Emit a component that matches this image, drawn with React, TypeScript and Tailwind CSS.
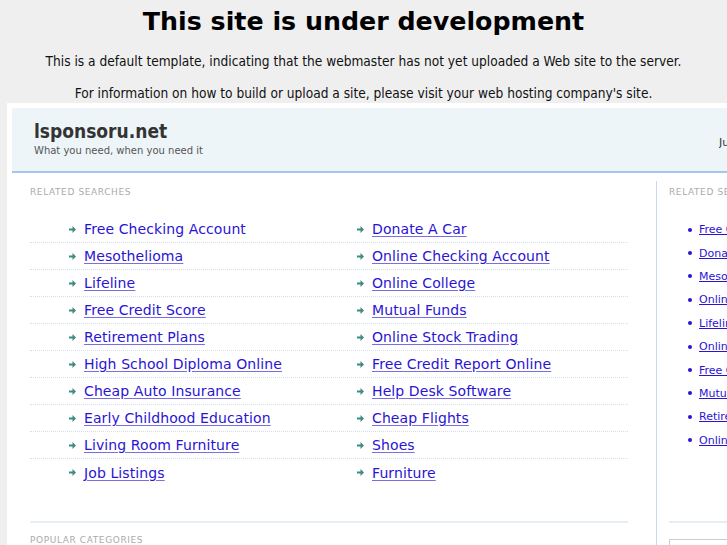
import React from "react";

const left: string[][] = [
  ["Free Checking Account", "Donate A Car"],
  ["Mesothelioma", "Online Checking Account"],
  ["Lifeline", "Online College"],
  ["Free Credit Score", "Mutual Funds"],
  ["Retirement Plans", "Online Stock Trading"],
  ["High School Diploma Online", "Free Credit Report Online"],
  ["Cheap Auto Insurance", "Help Desk Software"],
  ["Early Childhood Education", "Cheap Flights"],
  ["Living Room Furniture", "Shoes"],
  ["Job Listings", "Furniture"],
];

const right = [
  "Free Checking Account",
  "Donate A Car",
  "Mesothelioma",
  "Online Checking Account",
  "Lifeline",
  "Online College",
  "Free Credit Score",
  "Mutual Funds",
  "Retirement Plans",
  "Online Stock Trading",
];

function Arrow() {
  return (
    <svg width="7" height="7" viewBox="0 0 7 7" className="shrink-0">
      <path d="M0 2.5h3.5V0L7 3.5 3.5 7V4.5H0z" fill="#3c8c80" />
    </svg>
  );
}

function Cell({ text, first }: { text: string; first: boolean }) {
  return (
    <div className="flex items-center pl-[39px] h-full">
      <Arrow />
      <a
        href="#"
        className={`ml-[8px] text-[14px] leading-none text-[#2a14d4] tracking-[0.1px] ${first ? "no-underline" : "underline decoration-[#7a6ee6] underline-offset-2"}`}
      >
        {text}
      </a>
    </div>
  );
}

export default function App() {
  return (
    <div className="h-[545px] overflow-hidden bg-[#efefef] font-['DejaVu_Sans',sans-serif]">
      <h1 className="text-center font-bold text-[25.3px] leading-[30px] pt-[7px] text-black">
        This site is under development
      </h1>
      <p className="text-center text-[13.6px] leading-[17px] mt-[16px] text-[#111] font-['DejaVu_Sans_Condensed','DejaVu_Sans',sans-serif]">
        This is a default template, indicating that the webmaster has not yet uploaded a Web site to the server.
      </p>
      <p className="text-center text-[13.6px] leading-[17px] mt-[15px] text-[#111] font-['DejaVu_Sans_Condensed','DejaVu_Sans',sans-serif]">
        For information on how to build or upload a site, please visit your web hosting company's site.
      </p>
      <div className="ml-[7px] mt-[1px] bg-white pt-[5px] pl-[5px] h-[500px]">
        <div className="h-[65px] bg-[#eef5f8] border-b-2 border-[#a9c4ea] flex justify-between items-start">
          <div className="pl-[22px] pt-[12px]">
            <div className="text-[19px] leading-[22px] font-bold text-[#333] font-['DejaVu_Sans_Condensed','DejaVu_Sans',sans-serif]">
              lsponsoru.net
            </div>
            <div className="text-[10px] leading-[12px] text-[#555] mt-[3px]">What you need, when you need it</div>
          </div>
          <div className="pt-[27px] text-[11px] text-[#333] w-[8px] overflow-hidden whitespace-nowrap">June</div>
        </div>
        <div className="flex">
          <div className="w-[644px] shrink-0 pl-[18px] pr-[28px] pt-[14px]">
            <div className="text-[9px] leading-[11px] tracking-[0.6px] text-[#aaa] uppercase">Related searches</div>
            <div className="mt-[18px]">
              {left.map((row, i) => (
                <div
                  key={i}
                  className={`grid grid-cols-[288px_1fr] h-[27px] ${i < left.length - 1 ? "border-b border-dotted border-[#d3dfea]" : ""}`}
                >
                  <Cell text={row[0]} first={i === 0} />
                  <Cell text={row[1]} first={false} />
                </div>
              ))}
            </div>
            <div className="mt-[35px] border-t-2 border-[#e6eef5]" />
            <div className="mt-[12px] text-[9px] leading-[11px] tracking-[0.6px] text-[#aaa] uppercase">Popular categories</div>
          </div>
          <div className="mt-[8px] w-px h-[400px] bg-[#c6dbf3] shrink-0" />
          <div className="flex-1 pl-[12px] pt-[14px] overflow-hidden whitespace-nowrap">
            <div className="text-[9px] leading-[11px] tracking-[0.6px] text-[#aaa] uppercase">Related searches</div>
            <div className="mt-[20px] pl-[19px]">
              {right.map((t, i) => (
                <div key={i} className="h-[23.4px] flex items-center">
                  <span className="w-[4px] h-[4px] rounded-full bg-[#2a14d4] shrink-0" />
                  <a href="#" className="ml-[7px] text-[11px] leading-none text-[#2a14d4] underline">
                    {t}
                  </a>
                </div>
              ))}
            </div>
            <div className="mt-[69px] border-t-2 border-[#e6eef5]" />
            <div className="mt-[16px] h-[20px] border border-[#ccc] border-r-0" />
          </div>
        </div>
      </div>
    </div>
  );
}
